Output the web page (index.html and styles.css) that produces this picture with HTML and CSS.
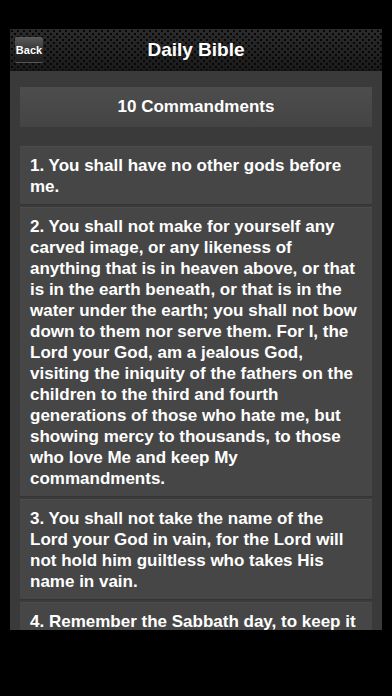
FILE: index.html
```html
<!DOCTYPE html>
<html>
<head>
<meta charset="utf-8">
<link rel="stylesheet" href="styles.css">
</head>
<body>
<div class="screen">
  <div class="navbar">
    <div class="back">Back</div>
    <div class="title">Daily Bible</div>
  </div>
  <div class="content">
    <div class="header">10 Commandments</div>
    <div class="list">
      <div class="item">1. You shall have no other gods before me.</div>
      <div class="item">2. You shall not make for yourself any carved image, or any likeness of anything that is in heaven above, or that is in the earth beneath, or that is in the water under the earth; you shall not bow down to them nor serve them. For I, the Lord your God, am a jealous God, visiting the iniquity of the fathers on the children to the third and fourth generations of those who hate me, but showing mercy to thousands, to those who love Me and keep My commandments.</div>
      <div class="item">3. You shall not take the name of the Lord your God in vain, for the Lord will not hold him guiltless who takes His name in vain.</div>
      <div class="item">4. Remember the Sabbath day, to keep it holy. Six days you shall labor and do all your work, but the seventh day is the Sabbath of the Lord your God.</div>
    </div>
  </div>
</div>
</body>
</html>
```
FILE: styles.css
```css
html, body {
  margin: 0;
  padding: 0;
  background: #000;
  width: 392px;
  height: 696px;
  overflow: hidden;
}
.screen {
  margin: 29px 0 0 10px;
  width: 372px;
  height: 601px;
  overflow: hidden;
  background: #3a3a3a;
  font-family: "Liberation Sans", Arial, sans-serif;
  color: #fff;
}
.navbar {
  position: relative;
  height: 41px;
  border-bottom: 1px solid #141414;
  background:
    radial-gradient(circle at 2px 2px, #070707 1px, transparent 1.6px) 0 0 / 6px 6px,
    radial-gradient(circle at 2px 2px, #070707 1px, transparent 1.6px) 3px 3px / 6px 6px,
    linear-gradient(#2c2c2c, #222 60%, #1b1b1b);
  display: flex;
  align-items: center;
  justify-content: center;
}
.back {
  position: absolute;
  left: 5px;
  top: 8px;
  width: 28px;
  height: 26px;
  box-sizing: border-box;
  display: flex;
  align-items: center;
  justify-content: center;
  font-size: 11px;
  font-weight: bold;
  color: #fff;
  background: linear-gradient(#5a5a5a, #3a3a3a 48%, #262626 52%, #1e1e1e);
  border-bottom: 1px solid #555;
  border-radius: 2px;
}
.title {
  font-size: 19px;
  font-weight: bold;
  color: #fff;
}
.content {
  padding: 16px 10px 0 10px;
}
.header {
  height: 40px;
  display: flex;
  align-items: center;
  justify-content: center;
  font-size: 17px;
  font-weight: bold;
  background: linear-gradient(#4d4d4d, #444);
  margin-bottom: 19px;
}
.list {
  display: flex;
  flex-direction: column;
  gap: 2px;
}
.item {
  background: #464646;
  border-top: 1px solid #4c4c4c;
  border-bottom: 1px solid #343434;
  padding: 8px 10px 7px 10px;
  font-size: 17px;
  line-height: 21px;
  font-weight: bold;
  color: #fff;
}
```
